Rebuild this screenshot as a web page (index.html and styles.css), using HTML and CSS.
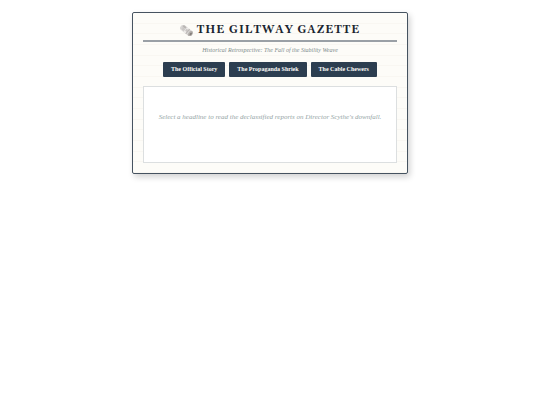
FILE: index.html
```html
<!DOCTYPE html>
<html lang="en">
<head>
    <meta charset="UTF-8">
    <meta name="viewport" content="width=device-width, initial-scale=1.0">
    <title>The Giltway Gazette</title>
    <link rel="stylesheet" href="styles.css">
</head>
<body>
    <main class="gazette">
        <header class="masthead">
            <svg class="paper-icon" viewBox="0 0 26 22" aria-hidden="true">
                <g transform="rotate(39 13 11)">
                    <rect x="-1" y="5" width="28" height="12" rx="4" fill="#d9d7d5"/>
                    <rect x="2" y="6" width="7" height="4" fill="#b9b6b4"/>
                    <path d="M3 12h6M3 14h6M18 8h4" stroke="#b3b0ae" stroke-width="1"/>
                    <path d="M10 5h5v12h-5z" fill="#efedeb"/>
                    <rect x="11" y="8" width="4" height="5" fill="#c9c6c4"/>
                    <path d="M16 5v12" stroke="#b9b5b2" stroke-width="2"/>
                    <ellipse cx="23" cy="11" rx="4" ry="6" fill="#b5b1ae"/>
                    <ellipse cx="24" cy="11" rx="2" ry="3" fill="#86807c"/>
                </g>
            </svg>
            <h1 class="title">The Giltway Gazette</h1>
        </header>
        <p class="subtitle">Historical Retrospective: The Fall of the Stability Weave</p>

        <nav class="headlines">
            <button class="headline" data-story="official">The Official Story</button>
            <button class="headline" data-story="propaganda">The Propaganda Shriek</button>
            <button class="headline" data-story="cable">The Cable Chewers</button>
        </nav>

        <section class="article">
            <p class="placeholder">Select a headline to read the declassified reports on Director Scythe's downfall.</p>
        </section>
    </main>
</body>
</html>
```

FILE: styles.css
```css
* {
    box-sizing: border-box;
}

body {
    margin: 0;
    padding: 12px;
    background: #fff;
    font-family: 'Liberation Serif', serif;
}

.gazette {
    max-width: 276px;
    margin: 0 auto;
    padding: 10px;
    border: 1px solid #465360;
    border-radius: 2px;
    background: repeating-linear-gradient(#fdfcf8 0 6%, #f9f7f2 6% 6.667%);
    box-shadow: 2px 3px 6px rgba(0, 0, 0, 0.18);
    text-align: center;
}

/* Masthead */
.masthead {
    display: flex;
    justify-content: center;
    align-items: center;
    gap: 4px;
    padding-bottom: 3px;
    border-bottom: 2px solid #9aa0a6;
}

.paper-icon {
    width: 13px;
    height: 11px;
}

.title {
    margin: 0;
    color: #1a252f;
    font-family: Gelasio, 'Liberation Serif', serif;
    font-size: 11px;
    line-height: 14px;
    letter-spacing: 1px;
    text-transform: uppercase;
}

.subtitle {
    margin: 3px 0 7px;
    color: #7f8c8d;
    font-size: 6px;
    line-height: 10px;
    font-style: italic;
}

/* Headline buttons */
.headlines {
    display: flex;
    flex-wrap: wrap;
    justify-content: center;
    gap: 4px;
    margin-bottom: 9px;
}

.headline {
    padding: 4px 8px;
    border: 0;
    border-radius: 1px;
    background: #2c3e50;
    color: #fdfcf8;
    font-family: inherit;
    font-size: 6px;
    font-weight: bold;
    line-height: 7px;
    cursor: pointer;
}

.headline:hover {
    background: #34495e;
}

.article {
    min-height: 77px;
    padding: 26px 10px;
    border: 1px solid #dcdfe0;
    background: #fff;
}

.placeholder {
    margin: 0;
    color: #95a5a6;
    font-size: 7px;
    line-height: 8px;
    font-style: italic;
}
```
